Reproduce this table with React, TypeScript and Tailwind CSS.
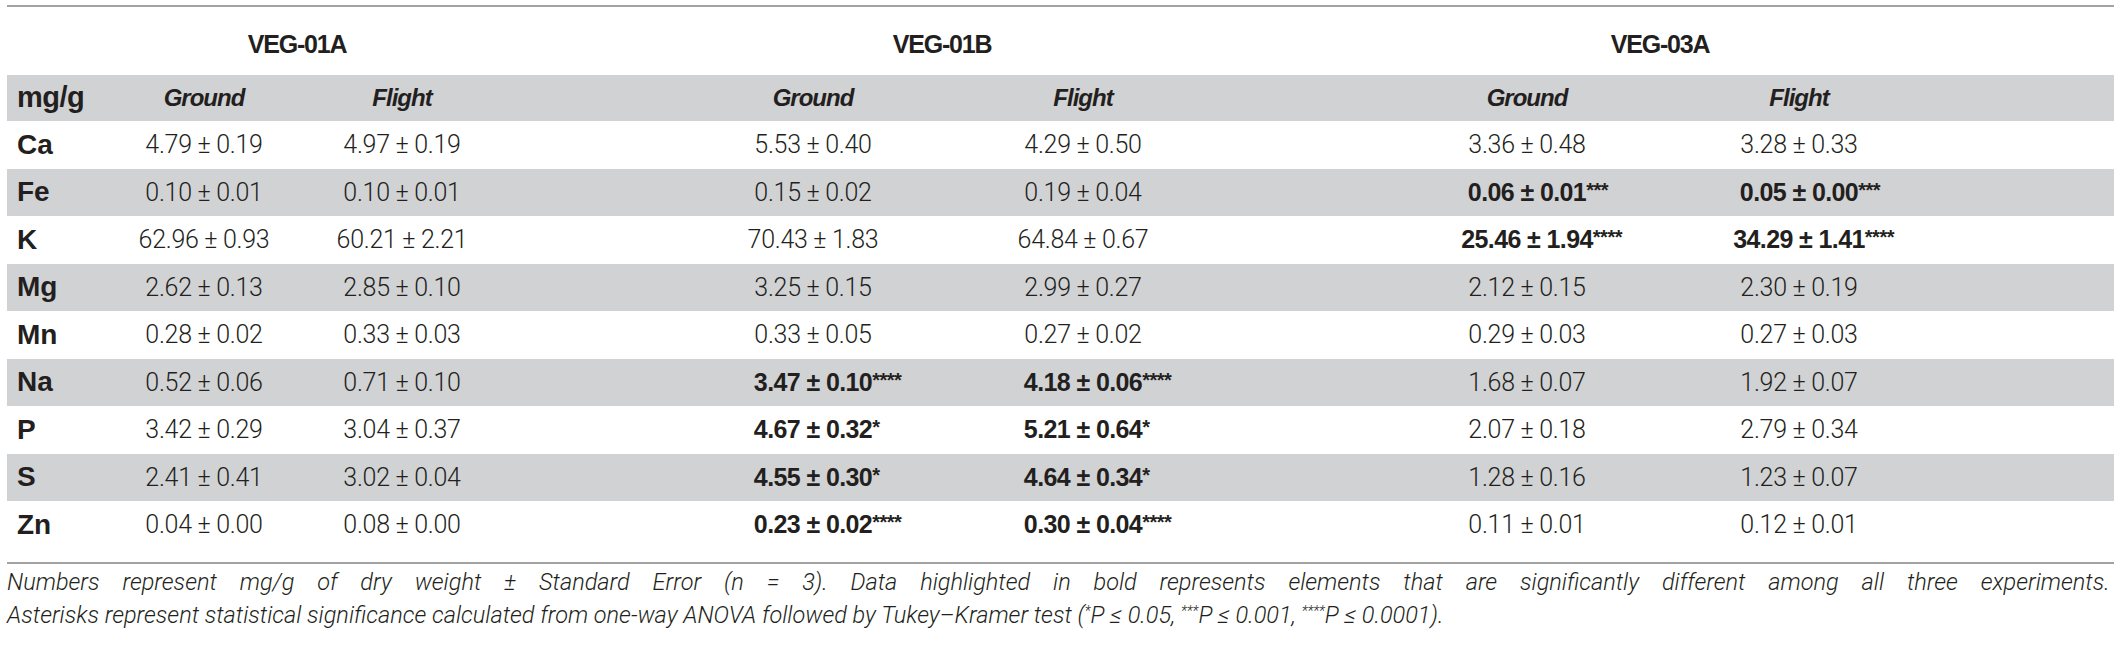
import React from 'react'

type Cell = { v: string; stars?: string; bold?: boolean }

const b = (v: string, stars = ''): Cell => ({ v, stars, bold: true })
const n = (v: string): Cell => ({ v })

const ROWS: { el: string; cells: Cell[] }[] = [
  { el: 'Ca', cells: [n('4.79 ± 0.19'), n('4.97 ± 0.19'), n('5.53 ± 0.40'), n('4.29 ± 0.50'), n('3.36 ± 0.48'), n('3.28 ± 0.33')] },
  { el: 'Fe', cells: [n('0.10 ± 0.01'), n('0.10 ± 0.01'), n('0.15 ± 0.02'), n('0.19 ± 0.04'), b('0.06 ± 0.01', '***'), b('0.05 ± 0.00', '***')] },
  { el: 'K', cells: [n('62.96 ± 0.93'), n('60.21 ± 2.21'), n('70.43 ± 1.83'), n('64.84 ± 0.67'), b('25.46 ± 1.94', '****'), b('34.29 ± 1.41', '****')] },
  { el: 'Mg', cells: [n('2.62 ± 0.13'), n('2.85 ± 0.10'), n('3.25 ± 0.15'), n('2.99 ± 0.27'), n('2.12 ± 0.15'), n('2.30 ± 0.19')] },
  { el: 'Mn', cells: [n('0.28 ± 0.02'), n('0.33 ± 0.03'), n('0.33 ± 0.05'), n('0.27 ± 0.02'), n('0.29 ± 0.03'), n('0.27 ± 0.03')] },
  { el: 'Na', cells: [n('0.52 ± 0.06'), n('0.71 ± 0.10'), b('3.47 ± 0.10', '****'), b('4.18 ± 0.06', '****'), n('1.68 ± 0.07'), n('1.92 ± 0.07')] },
  { el: 'P', cells: [n('3.42 ± 0.29'), n('3.04 ± 0.37'), b('4.67 ± 0.32', '*'), b('5.21 ± 0.64', '*'), n('2.07 ± 0.18'), n('2.79 ± 0.34')] },
  { el: 'S', cells: [n('2.41 ± 0.41'), n('3.02 ± 0.04'), b('4.55 ± 0.30', '*'), b('4.64 ± 0.34', '*'), n('1.28 ± 0.16'), n('1.23 ± 0.07')] },
  { el: 'Zn', cells: [n('0.04 ± 0.00'), n('0.08 ± 0.00'), b('0.23 ± 0.02', '****'), b('0.30 ± 0.04', '****'), n('0.11 ± 0.01'), n('0.12 ± 0.01')] },
]

// label | A ground | A flight | gap | B ground | B flight | gap | C ground | C flight
const GRID = 'grid grid-cols-[98px_198px_198px_177px_270px_270px_173px_272px_272px]'
const COLS = ['col-start-2', 'col-start-3', 'col-start-5', 'col-start-6', 'col-start-8', 'col-start-9']

const sans = "font-['Liberation_Sans',Arial,sans-serif]"
const light = "font-['Roboto','Liberation_Sans',sans-serif] font-light"

const NOTE_1 =
  'Numbers represent mg/g of dry weight ± Standard Error (n = 3). Data highlighted in bold represents elements that are significantly different among all three experiments.'

function Value({ cell }: { cell: Cell }) {
  if (!cell.bold) return <span className={`${light} text-[25px] tracking-[-0.3px]`}>{cell.v}</span>
  return (
    <span className={`relative ${sans} font-bold text-[25px] tracking-[-0.6px]`}>
      {cell.v}
      <span className="absolute left-full top-[-3px] text-[20px] tracking-[-0.5px]">{cell.stars}</span>
    </span>
  )
}

export default function App() {
  return (
    <div className="w-[2120px] h-[649px] bg-white text-[#231f20] pt-[5px]">
      <div className="ml-[7px] w-[2107px]">
        <div className="border-t-2 border-[#a3a3a3]" />

        {/* experiment headers */}
        <div className={`${GRID} h-[68px] items-center pt-[7px] ${sans} font-bold text-[25px] tracking-[-1.2px]`}>
          <div className="col-start-2 col-span-2 text-center pr-[12px]">VEG-01A</div>
          <div className="col-start-5 col-span-2 text-center pr-[12px]">VEG-01B</div>
          <div className="col-start-8 col-span-2 text-center pr-[6px]">VEG-03A</div>
        </div>

        {/* column headers */}
        <div className={`${GRID} h-[46px] items-center bg-[#d1d2d4] ${sans} font-bold`}>
          <div className="pl-[10px] text-[29px] tracking-[-0.5px]">mg/g</div>
          {['Ground', 'Flight', 'Ground', 'Flight', 'Ground', 'Flight'].map((h, i) => (
            <div key={i} className={`${COLS[i]} text-center italic text-[24px] tracking-[-1px]`}>
              {h}
            </div>
          ))}
        </div>

        {ROWS.map((r, ri) => (
          <div
            key={r.el}
            className={`${GRID} h-[47.5px] items-center ${ri % 2 === 1 ? 'bg-[#d1d2d4]' : ''}`}
          >
            <div className={`pl-[10px] ${sans} font-bold text-[28px]`}>{r.el}</div>
            {r.cells.map((c, ci) => (
              <div key={ci} className={`${COLS[ci]} text-center whitespace-nowrap`}>
                <Value cell={c} />
              </div>
            ))}
          </div>
        ))}

        <div className="h-[13px]" />
        <div className="border-t-2 border-[#a3a3a3]" />

        {/* footnote, first line justified */}
        <div className={`${light} italic text-[23.5px] leading-[33px] pt-[2px] pr-[4px]`}>
          <div className="flex justify-between whitespace-nowrap">
            {NOTE_1.split(' ').map((w, i) => (
              <span key={i}>{w}</span>
            ))}
          </div>
          <div className="whitespace-nowrap">
            Asterisks represent statistical significance calculated from one-way ANOVA followed by Tukey–Kramer
            test (<sup className="text-[14px]">*</sup>P ≤ 0.05, <sup className="text-[14px]">***</sup>P ≤ 0.001,{' '}
            <sup className="text-[14px]">****</sup>P ≤ 0.0001).
          </div>
        </div>
      </div>
    </div>
  )
}
